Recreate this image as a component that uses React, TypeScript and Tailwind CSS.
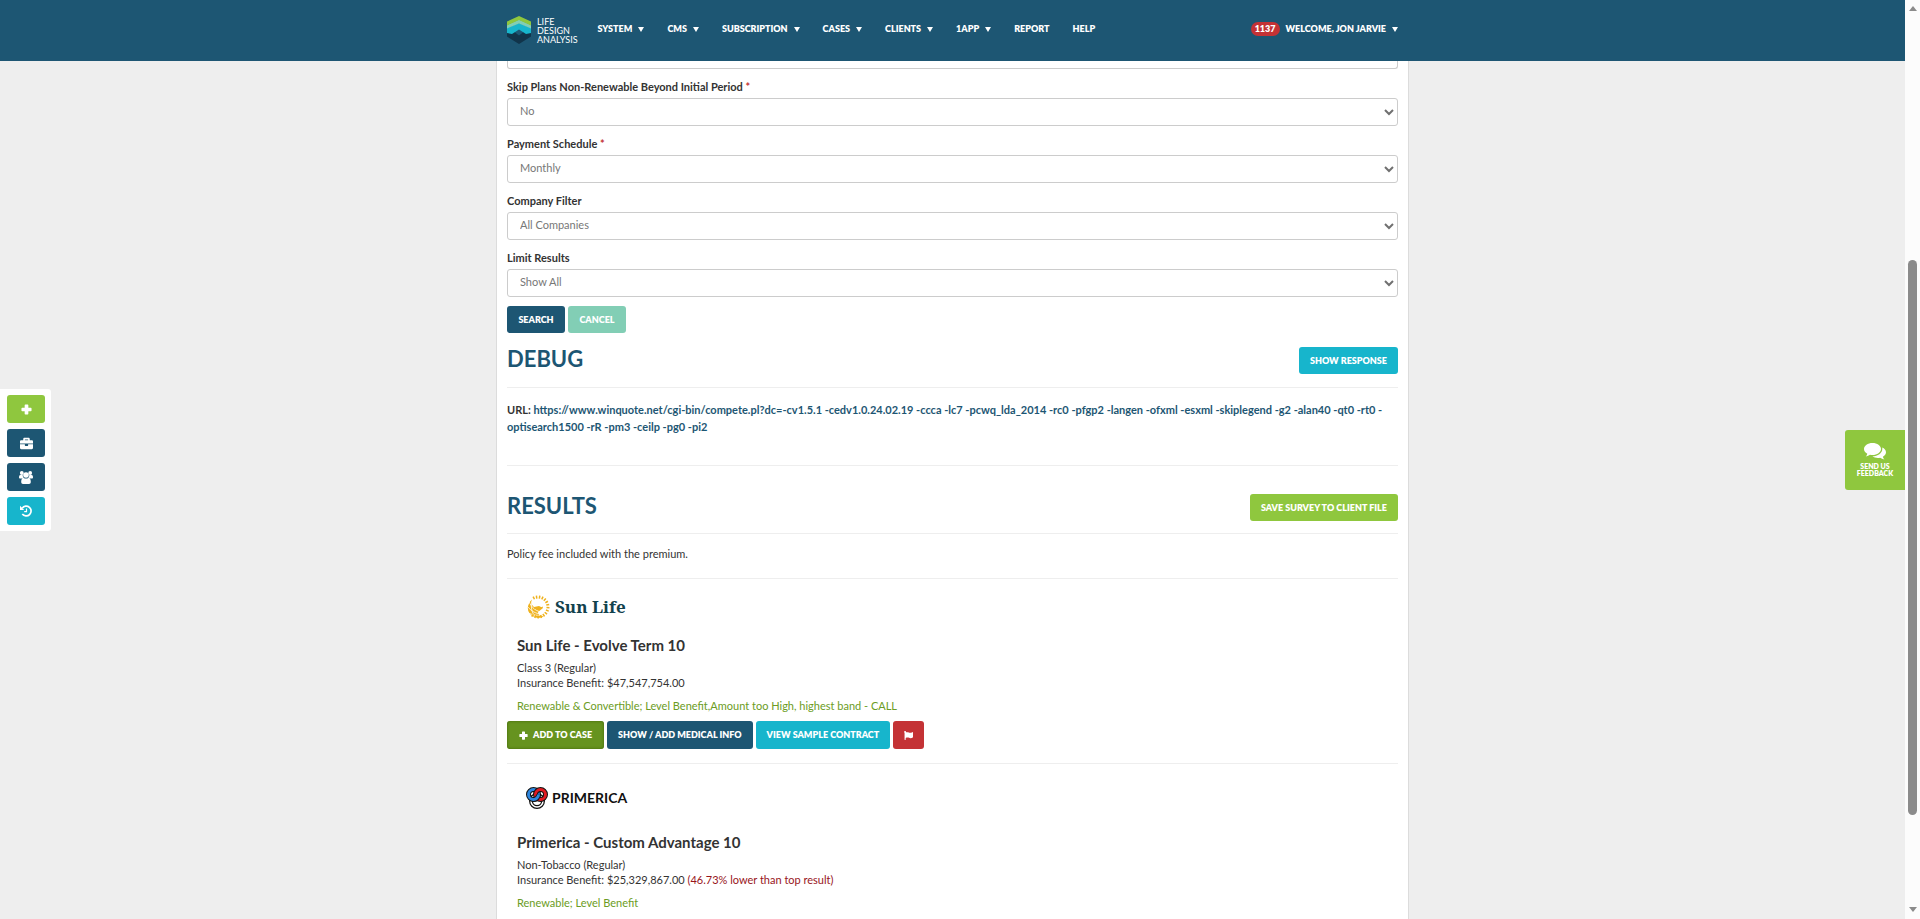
import { useState } from "react";
import type { ReactNode } from "react";
import { FaBriefcase, FaFlag } from "react-icons/fa";

const navItems = [
  { label: "System", menu: true },
  { label: "CMS", menu: true },
  { label: "Subscription", menu: true },
  { label: "Cases", menu: true },
  { label: "Clients", menu: true },
  { label: "1App", menu: true },
  { label: "Report", menu: false },
  { label: "Help", menu: false },
];

const filters = [
  { id: "skip", label: "Skip Plans Non-Renewable Beyond Initial Period", required: true, options: ["No", "Yes"] },
  { id: "schedule", label: "Payment Schedule", required: true, options: ["Monthly", "Annually"] },
  { id: "company", label: "Company Filter", required: false, options: ["All Companies"] },
  { id: "limit", label: "Limit Results", required: false, options: ["Show All", "10", "25"] },
];

const debugUrl =
  "https://www.winquote.net/cgi-bin/compete.pl?dc=-cv1.5.1 -cedv1.0.24.02.19 -ccca -lc7 -pcwq_lda_2014 -rc0 -pfgp2 -langen -ofxml -esxml -skiplegend -g2 -alan40 -qt0 -rt0 -optisearch1500 -rR -pm3 -ceilp -pg0 -pi2";

function Caret() {
  return <span className="inline-block border-x-3 border-t-5 border-x-transparent border-t-white" />;
}

function Button({ className, children, label }: { className: string; children: ReactNode; label?: string }) {
  return (
    <button
      type="button"
      aria-label={label}
      className={`flex items-center justify-center rounded-[3px] text-[9px] font-extrabold uppercase text-white whitespace-nowrap ${className}`}
    >
      {children}
    </button>
  );
}

function PlusIcon({ size }: { size: number }) {
  return (
    <svg width={size} height={size} viewBox="0 0 12 12" fill="currentColor">
      <path d="M4.800 0.500h2.400a0.800 0.800 0 0 1 0.800 0.800v2.700h2.700a0.800 0.800 0 0 1 0.800 0.800v2.400a0.800 0.800 0 0 1-0.800 0.800H8v2.700a0.800 0.800 0 0 1-0.800 0.800H4.800a0.800 0.800 0 0 1-0.800-0.800V8H1.300a0.800 0.800 0 0 1-0.800-0.800V4.800a0.800 0.800 0 0 1 0.800-0.800H4V1.300a0.800 0.800 0 0 1 0.800-0.800z" />
    </svg>
  );
}

function GroupIcon() {
  return (
    <svg width="14" height="13" viewBox="0 0 14 13" fill="currentColor">
      <circle cx="2.800" cy="2" r="1.900" />
      <circle cx="11.200" cy="2" r="1.900" />
      <circle cx="7" cy="4" r="2.800" />
      <path d="M0 6.500C0 4.800 0.500 4 1.500 4h2.200c0 1.200 0.300 2 1 2.800L3.500 7.500H1.200C0.500 7.500 0 7.200 0 6.500zM14 6.500C14 4.800 13.500 4 12.500 4h-2.200c0 1.200-0.300 2-1 2.800l1.200 0.700h2.300c0.700 0 1.200-0.300 1.200-1z" />
      <path d="M4.500 6.700c1.500 1.200 3.500 1.200 5 0 1.800 0.300 2.300 2 2.300 4.300 0 1.200-0.700 2-1.800 2H4c-1.100 0-1.800-0.800-1.800-2 0-2.300 0.500-4 2.300-4.300z" />
    </svg>
  );
}

function HistoryIcon() {
  return (
    <svg width="12" height="12" viewBox="0 0 12 12" fill="none" stroke="currentColor">
      <path d="M2.200 3.200A4.900 4.900 0 1 1 2.300 9" strokeWidth="1.700" />
      <path d="M0 0.800v4.200h4.200z" fill="currentColor" stroke="none" />
      <path d="M6.500 3.500v3.200H4.200" strokeWidth="1.200" />
    </svg>
  );
}

function CommentsIcon() {
  return (
    <svg width="22" height="17" viewBox="0 0 22 17" fill="currentColor">
      <path d="M8.500 0C13.200 0 17 2.700 17 6s-3.800 6-8.500 6c-0.900 0-1.700-0.100-2.500-0.300-1.200 0.900-2.600 1.500-4.200 1.700 0.800-0.800 1.300-1.600 1.500-2.700C1.300 9.600 0 7.900 0 6c0-3.300 3.800-6 8.500-6z" />
      <path d="M18.200 4.500C20.500 5.500 22 7.200 22 9.200c0 1.800-1.200 3.400-3.100 4.500 0.200 1 0.700 1.900 1.500 2.700-1.700-0.200-3.100-0.800-4.300-1.700-2.600 0.600-5.600 0.100-7.700-1.400 5.500 0 9.900-3.200 9.900-7.300 0-0.500 0-1-0.100-1.500z" />
    </svg>
  );
}

function SiteLogo() {
  return (
    <a href="#" className="flex items-center gap-[6px]">
      <svg width="24" height="28" viewBox="0 0 24 28">
        <path d="M0 16l5-2h14l5 2v4.500L12 28 0 20.500z" fill="#11344a" />
        <path d="M5 14h14l-7 5.500z" fill="#1d5673" />
        <path d="M0 12l12-5 12 5v5l-5 1-7-4.500L5 18l-5-1z" fill="#17b5cc" />
        <path d="M0 9l12-5.500L24 9v3.500l-12-5-12 5z" fill="#82ceb5" />
        <path d="M0 5.500L12 0l12 5.500v4L12 4 0 9.500z" fill="#8fc73e" />
      </svg>
      <span className="text-[9px] leading-[9px] text-white uppercase">
        Life
        <br />
        Design
        <br />
        Analysis
      </span>
    </a>
  );
}

function SunLifeLogo() {
  const rays = Array.from({ length: 15 }, (_, i) => i * 17 - 25);
  return (
    <div className="flex items-center gap-[5px]">
      <svg width="24" height="24" viewBox="0 0 24 24">
        <path d="M6 4.500A9.800 9.800 0 1 0 18 21c-3 0.500-6-1-6-4l5-4-4-2-5 1c-3-2-3-5-2-7.500z" fill="#efb21e" />
        <path d="M1 11c4 5 9 8 15 8M3 6c2 7 8 11 14 11M7 4c-3 6-2 14 4 20M2 18c5 2 10 3 15 2" fill="none" stroke="#fff" strokeWidth="0.800" />
        <path d="M8 13c3 1 6 1 9-1" fill="none" stroke="#efb21e" strokeWidth="1" />
        {rays.map((a) => (
          <path key={a} d="M12 0.500v3" stroke="#efb21e" strokeWidth="1.500" transform={`rotate(${a} 12 12)`} />
        ))}
      </svg>
      <span className="font-['Noto_Serif','Liberation_Serif',serif] text-[17px] leading-[24px] font-bold text-[#12424d]">Sun Life</span>
    </div>
  );
}

function PrimericaLogo() {
  return (
    <div className="flex items-center gap-[4px]">
      <svg width="22" height="22" viewBox="0 0 22 22" fill="none">
        <circle cx="11" cy="14" r="6" stroke="#111" strokeWidth="4" />
        <circle cx="11" cy="14" r="6" stroke="#fff" strokeWidth="1.500" />
        <circle cx="7.500" cy="7.500" r="5" stroke="#111" strokeWidth="5" />
        <circle cx="7.500" cy="7.500" r="5" stroke="#2e86de" strokeWidth="3" />
        <circle cx="14.500" cy="7.500" r="5" stroke="#111" strokeWidth="5" />
        <circle cx="14.500" cy="7.500" r="5" stroke="#e01b22" strokeWidth="3" />
        <path d="M7.500 12.500a5 5 0 0 0 5-5" stroke="#111" strokeWidth="5" />
        <path d="M7 12.500a5 5 0 0 0 5.500-5" stroke="#2e86de" strokeWidth="3" />
      </svg>
      <span className="text-[14px] leading-[22px] font-bold text-[#111]">PRIMERICA</span>
    </div>
  );
}

function ResultInfo({ title, rating, benefit, note, tags }: { title: string; rating: string; benefit: string; note?: string; tags: string }) {
  return (
    <div className="px-[10px]">
      <h3 className="text-[15px] leading-[20px] font-bold">{title}</h3>
      <p className="mt-[5px] leading-[15px]">
        {rating}
        <br />
        Insurance Benefit: {benefit} {note && <span className="text-[#98151b]">{note}</span>}
      </p>
      <p className="mt-[8px] leading-[15px] text-[#6b9c24]">{tags}</p>
    </div>
  );
}

export default function App() {
  const [values, setValues] = useState<Record<string, string>>({});

  return (
    <div className="flex h-screen overflow-hidden bg-[#eeeeee] font-[Lato,'Open_Sans',sans-serif] text-[11px] text-[#333333]">
      <div className="relative flex h-full min-w-0 flex-1 flex-col">
        <header className="h-[61px] shrink-0 bg-[#1d5673]">
          <div className="mx-auto flex w-full max-w-[891px] items-start justify-between">
            <div className="flex items-start">
              <div className="pt-[16px]">
                <SiteLogo />
              </div>
              <nav className="flex gap-[23px] pt-[22px] pl-[20px]">
                {navItems.map((item) => (
                  <a key={item.label} href="#" className="flex items-center gap-[6px] text-[9px] leading-[14px] font-extrabold text-white uppercase">
                    {item.label}
                    {item.menu && <Caret />}
                  </a>
                ))}
              </nav>
            </div>
            <a href="#" className="mt-[22px] flex items-center gap-[6px] text-[9px] leading-[14px] font-extrabold text-white uppercase">
              <span className="rounded-full bg-[#c43235] px-[4px]">1137</span>
              Welcome, Jon Jarvie
              <Caret />
            </a>
          </div>
        </header>

        <main className="mx-auto min-h-0 w-full max-w-[913px] flex-1 overflow-hidden border-x border-[#dcdcdc] bg-white px-[10px]">
          <div className="h-[8px] rounded-b-[3px] border border-t-0 border-[#cccccc]" />

          <form>
            {filters.map((f) => (
              <div key={f.id} className="pt-[10px]">
                <label htmlFor={f.id} className="block h-[19px] leading-[16px] font-bold">
                  {f.label} {f.required && <span className="text-[#c43235]">*</span>}
                </label>
                <div className="relative">
                  <select
                    id={f.id}
                    value={values[f.id] ?? f.options[0]}
                    onChange={(e) => setValues({ ...values, [f.id]: e.target.value })}
                    className="block h-[28px] w-full appearance-none rounded-[3px] border border-[#cccccc] bg-white px-[12px] pb-[2px] text-[#777777]"
                  >
                    {f.options.map((o) => (
                      <option key={o}>{o}</option>
                    ))}
                  </select>
                  <svg className="pointer-events-none absolute top-[11px] right-[4px]" width="10" height="7" viewBox="0 0 10 7">
                    <path d="M1 1l4 4 4-4" fill="none" stroke="#707070" strokeWidth="2" />
                  </svg>
                </div>
              </div>
            ))}
            <div className="flex gap-[3px] pt-[9px]">
              <Button className="h-[27px] w-[58px] bg-[#1d5673]">Search</Button>
              <Button className="h-[27px] w-[58px] bg-[#82ceb5]">Cancel</Button>
            </div>
          </form>

          <div className="flex items-start justify-between border-b border-[#eeeeee] pt-[14px] pb-[13px]">
            <h2 className="text-[22px] leading-[24px] font-bold text-[#1d5673]">DEBUG</h2>
            <Button className="h-[27px] bg-[#17b5cc] px-[11px]">Show Response</Button>
          </div>
          <p className="border-b border-[#eeeeee] pt-[13px] pb-[30px] leading-[17px] font-bold">
            URL: <span className="text-[#1d5673]">{debugUrl}</span>
          </p>

          <div className="flex items-start justify-between border-b border-[#eeeeee] pt-[28px] pb-[12px]">
            <h2 className="text-[22px] leading-[24px] font-bold text-[#1d5673]">RESULTS</h2>
            <Button className="h-[27px] bg-[#8fc73e] px-[11px]">Save Survey To Client File</Button>
          </div>
          <p className="border-b border-[#eeeeee] pt-[12px] pb-[16px] leading-[16px]">Policy fee included with the premium.</p>

          <section className="border-b border-[#eeeeee] pt-[16px] pb-[14px]">
            <div className="pb-[16px] pl-[19px]">
              <SunLifeLogo />
            </div>
            <ResultInfo
              title="Sun Life - Evolve Term 10"
              rating="Class 3 (Regular)"
              benefit="$47,547,754.00"
              tags="Renewable & Convertible; Level Benefit,Amount too High, highest band - CALL"
            />
            <div className="flex gap-[3px] pt-[8px]">
              <Button className="h-[28px] gap-[5px] bg-[#66931f] px-[12px] shadow-[inset_0_0_3px_#3f6408]">
                <PlusIcon size={9} />
                Add To Case
              </Button>
              <Button className="h-[28px] bg-[#1d5673] px-[11px]">Show / Add Medical Info</Button>
              <Button className="h-[28px] bg-[#17b5cc] px-[11px]">View Sample Contract</Button>
              <Button label="Flag" className="h-[28px] bg-[#c43235] px-[11px]">
                <FaFlag size={9} />
              </Button>
            </div>
          </section>

          <section className="pt-[23px]">
            <div className="pb-[23px] pl-[19px]">
              <PrimericaLogo />
            </div>
            <ResultInfo
              title="Primerica - Custom Advantage 10"
              rating="Non-Tobacco (Regular)"
              benefit="$25,329,867.00"
              note="(46.73% lower than top result)"
              tags="Renewable; Level Benefit"
            />
          </section>
        </main>

        {/* Quick actions */}
        <aside className="absolute top-[389px] left-0 flex w-[51px] flex-col gap-[6px] rounded-r-[3px] bg-white py-[6px] pr-[6px] pl-[7px]">
          <Button label="Add" className="h-[28px] bg-[#8fc73e]">
            <PlusIcon size={11} />
          </Button>
          <Button label="Cases" className="h-[28px] bg-[#1d5673]">
            <FaBriefcase size={13} />
          </Button>
          <Button label="Clients" className="h-[28px] bg-[#1d5673]">
            <GroupIcon />
          </Button>
          <Button label="History" className="h-[28px] bg-[#17b5cc]">
            <HistoryIcon />
          </Button>
        </aside>

        <button
          type="button"
          className="absolute top-[430px] right-0 flex h-[60px] w-[60px] flex-col items-center rounded-l-[3px] bg-[#8fc73e] pt-[13px] text-[7px] leading-[7px] font-extrabold text-white uppercase"
        >
          <CommentsIcon />
          <span className="pt-[3px]">
            Send Us
            <br />
            Feedback
          </span>
        </button>
      </div>

      {/* Scroll track */}
      <div className="flex w-[15px] shrink-0 flex-col items-center bg-[#fcfcfc] pt-[6px] pb-[7px]">
        <span className="border-x-4 border-b-5 border-x-transparent border-b-[#8b8b8b]" />
        <div className="w-full flex-1 px-[3px] pt-[249px] pb-[92px]">
          <div className="h-full rounded-full bg-[#8b8b8b]" />
        </div>
        <span className="border-x-4 border-t-5 border-x-transparent border-t-[#8b8b8b]" />
      </div>
    </div>
  );
}
